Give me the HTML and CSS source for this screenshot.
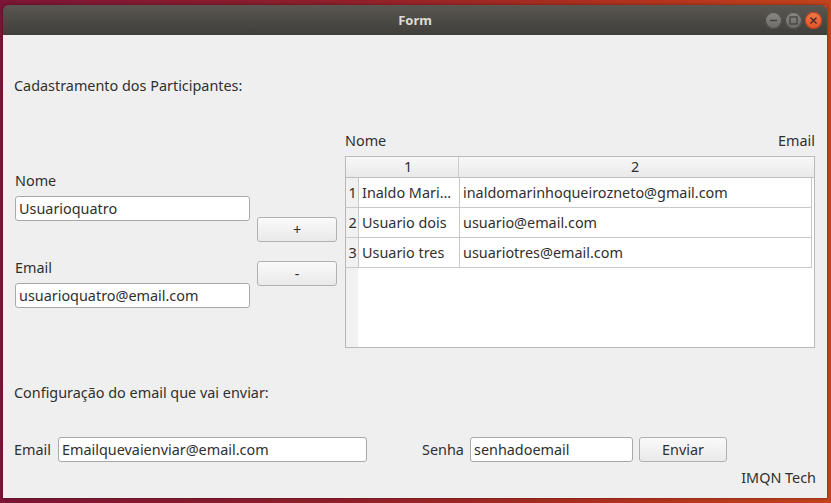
FILE: index.html
```html
<!DOCTYPE html>
<html>
<head>
<meta charset="utf-8">
<link rel="stylesheet" href="styles.css">
</head>
<body>
<div class="window">
  <div class="titlebar">
    <span class="title">Form</span>
    <div class="controls">
      <span class="ctl"><svg width="17" height="17" viewBox="0 0 17 17"><line x1="5" y1="8.5" x2="12" y2="8.5" stroke="#3a3935" stroke-width="1.2"/></svg></span>
      <span class="ctl"><svg width="17" height="17" viewBox="0 0 17 17"><rect x="5" y="5" width="7" height="7" fill="none" stroke="#3a3935" stroke-width="1.1"/></svg></span>
      <span class="ctl close"><svg width="17" height="17" viewBox="0 0 17 17"><path d="M5.5 5.5 L11.5 11.5 M11.5 5.5 L5.5 11.5" stroke="#3a2a22" stroke-width="1.2"/></svg></span>
    </div>
  </div>
  <div class="content">
    <div class="heading">Cadastramento dos Participantes:</div>
    <div class="middle">
      <div class="leftcol">
        <div class="lbl lbl-nome">Nome</div>
        <div class="input wide">Usuarioquatro</div>
        <div class="lbl lbl-email">Email</div>
        <div class="input wide">usuarioquatro@email.com</div>
      </div>
      <div class="btncol">
        <div class="btn plus">+</div>
        <div class="btn minus">-</div>
      </div>
      <div class="tablecol">
        <div class="tlabels"><span>Nome</span><span>Email</span></div>
        <div class="table">
          <div class="thead">
            <div class="corner"></div>
            <div class="hc c1">1</div>
            <div class="hc c2">2</div>
          </div>
          <div class="trow">
            <div class="rh">1</div>
            <div class="cell c1">Inaldo Mari…</div>
            <div class="cell c2">inaldomarinhoqueirozneto@gmail.com</div>
          </div>
          <div class="trow">
            <div class="rh">2</div>
            <div class="cell c1">Usuario dois</div>
            <div class="cell c2">usuario@email.com</div>
          </div>
          <div class="trow">
            <div class="rh">3</div>
            <div class="cell c1">Usuario tres</div>
            <div class="cell c2">usuariotres@email.com</div>
          </div>
          <div class="tempty"><div class="rhfill"></div></div>
        </div>
      </div>
    </div>
    <div class="heading2">Configuração do email que vai enviar:</div>
    <div class="bottomrow">
      <span class="blbl email">Email</span>
      <div class="input sendmail">Emailquevaienviar@email.com</div>
      <span class="blbl senha">Senha</span>
      <div class="input pass">senhadoemail</div>
      <div class="btn enviar">Enviar</div>
    </div>
    <div class="footer">IMQN Tech</div>
  </div>
</div>
</body>
</html>
```
FILE: styles.css
```css
html, body {
  margin: 0;
  padding: 0;
}
body {
  width: 831px;
  height: 503px;
  overflow: hidden;
  background: linear-gradient(90deg, #7c1636 0%, #8e1f2b 40%, #b0321e 75%, #c2431c 100%);
  font-family: "Noto Sans", "DejaVu Sans", sans-serif;
  font-size: 14.4px;
  color: #2f2f2f;
}
.window {
  margin: 5px 0 0 3px;
  width: 824px;
  height: 493px;
  display: flex;
  flex-direction: column;
  box-shadow: 0 0 3px rgba(0,0,0,0.4);
}
.titlebar {
  height: 30px;
  background: linear-gradient(#5a5752, #3f3e3a);
  border-radius: 6px 6px 0 0;
  display: flex;
  align-items: center;
  justify-content: center;
  position: relative;
}
.title {
  color: #dfdbd2;
  font-weight: bold;
  font-size: 13px;
}
.controls {
  position: absolute;
  right: 5px;
  top: 7px;
  display: flex;
  gap: 3px;
}
.ctl {
  width: 17px;
  height: 17px;
  border-radius: 50%;
  background: linear-gradient(#8a8883, #6c6a66);
  box-shadow: inset 0 0 0 1px #4a4945;
  display: flex;
}
.ctl.close {
  background: linear-gradient(#f07a4a, #e0522a);
  box-shadow: inset 0 0 0 1px #b8401e;
}
.content {
  flex: 1;
  background: #efefef;
  padding: 41px 0 0 11px;
  display: flex;
  flex-direction: column;
}
.heading, .heading2, .lbl, .tlabels, .blbl, .footer {
  line-height: 20px;
}
.middle {
  display: flex;
  margin-top: 35px;
  height: 217px;
}
.leftcol {
  width: 235px;
  margin-left: 1px;
  padding-top: 40px;
  display: flex;
  flex-direction: column;
}
.lbl-email {
  margin-top: 37px;
}
.input {
  height: 25px;
  box-sizing: border-box;
  background: #fff;
  border: 1px solid #a9a9a9;
  border-radius: 3px;
  padding: 0 3px;
  line-height: 23px;
  white-space: nowrap;
  overflow: hidden;
}
.lbl + .input {
  margin-top: 5px;
}
.btncol {
  width: 80px;
  margin-left: 7px;
  padding-top: 86px;
  display: flex;
  flex-direction: column;
}
.btn {
  height: 25px;
  box-sizing: border-box;
  border: 1px solid #b1b1b1;
  border-radius: 3px;
  background: linear-gradient(#fafafa, #e9e9e9);
  text-align: center;
  line-height: 23px;
}
.minus {
  margin-top: 19px;
}
.tablecol {
  width: 470px;
  margin-left: 8px;
  display: flex;
  flex-direction: column;
}
.tlabels {
  display: flex;
  justify-content: space-between;
}
.table {
  margin-top: 5px;
  height: 192px;
  box-sizing: border-box;
  border: 1px solid #b9b9b9;
  background: #fff;
  display: flex;
  flex-direction: column;
}
.thead {
  display: flex;
  height: 21px;
  box-sizing: border-box;
  background: linear-gradient(#f8f8f8, #e9e9e9);
  border-bottom: 1px solid #c0c0c0;
}
.corner, .rh, .rhfill {
  width: 12px;
  flex: none;
  background: #f1f1f1;
}
.corner {
  background: transparent;
}
.hc {
  text-align: center;
  line-height: 20px;
  box-sizing: border-box;
}
.c1 {
  width: 100px;
  flex: none;
}
.c2 {
  width: 353px;
  flex: none;
}
.hc.c2 {
  border-left: 1px solid #cdcdcd;
}
.trow {
  display: flex;
  height: 30px;
  box-sizing: border-box;
  border-bottom: 1px solid #c8c8c8;
  width: 466px;
}
.rh {
  line-height: 29px;
  text-align: center;
  border-right: 1px solid #c8c8c8;
  width: 13px;
  box-sizing: border-box;
  padding-left: 1px;
}
.cell {
  line-height: 29px;
  padding-left: 3px;
  box-sizing: border-box;
  white-space: nowrap;
  overflow: hidden;
}
.cell.c2 {
  border-left: 1px solid #c8c8c8;
  border-right: 1px solid #c8c8c8;
}
.tempty {
  flex: 1;
  display: flex;
}
.rhfill {
  width: 12px;
}
.heading2 {
  margin-top: 35px;
}
.bottomrow {
  display: flex;
  align-items: center;
  margin-top: 34px;
  height: 25px;
}
.blbl {
  flex: none;
}
.blbl.email {
  width: 44px;
}
.sendmail {
  width: 309px;
}
.senha {
  width: 48px;
  margin-left: 55px;
}
.pass {
  width: 163px;
}
.enviar {
  width: 88px;
  margin-left: 6px;
}
.footer {
  margin-top: 6px;
  text-align: right;
  padding-right: 11px;
}
```
